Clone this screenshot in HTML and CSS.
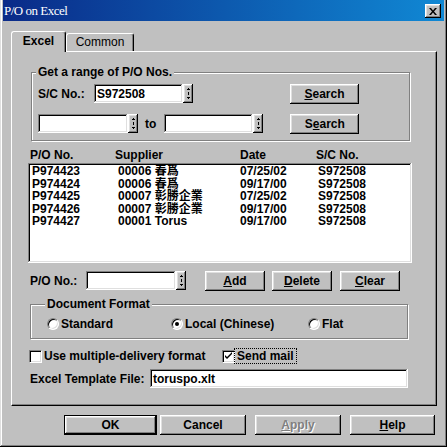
FILE: index.html
```html
<!DOCTYPE html>
<html lang="en">
<head>
    <meta charset="UTF-8">
    <title>P/O on Excel</title>
    <link rel="stylesheet" href="styles.css">
</head>
<body>

<div class="window">
    <div class="titlebar">
        <span class="title">P/O on Excel</span>
        <span class="close">
            <svg width="8" height="7" viewBox="0 0 8 7"><path d="M0 0h2l2 2.5L6 0h2L5 3.5 8 7H6L4 4.5 2 7H0l3-3.5z"/></svg>
        </span>
    </div>

    <div class="tabs">
        <div class="tab active">Excel</div>
        <div class="tab">Common</div>
    </div>

    <div class="panel">
        <fieldset class="group range">
            <legend>Get a range of P/O Nos.</legend>
            <div class="row">
                <span class="label sc-label">S/C No.:</span>
                <div class="combo">
                    <span class="field sc-field">S972508</span>
                    <span class="spin"><svg width="3" height="11" viewBox="0 0 3 11"><path d="M1 0h1v1H1zM0 1h3v1H0zM1 4h1v3H1zM0 9h3v1H0zM1 10h1v1H1z"/></svg></span>
                </div>
                <span class="btn search1"><span><u>S</u>earch</span></span>
            </div>
            <div class="row row2">
                <div class="combo">
                    <span class="field from-field"></span>
                    <span class="spin"><svg width="3" height="11" viewBox="0 0 3 11"><path d="M1 0h1v1H1zM0 1h3v1H0zM1 4h1v3H1zM0 9h3v1H0zM1 10h1v1H1z"/></svg></span>
                </div>
                <span class="to">to</span>
                <div class="combo">
                    <span class="field to-field"></span>
                    <span class="spin"><svg width="3" height="11" viewBox="0 0 3 11"><path d="M1 0h1v1H1zM0 1h3v1H0zM1 4h1v3H1zM0 9h3v1H0zM1 10h1v1H1z"/></svg></span>
                </div>
                <span class="btn search2"><span>S<u>e</u>arch</span></span>
            </div>
        </fieldset>

        <div class="list-head">
            <span>P/O No.</span>
            <span>Supplier</span>
            <span>Date</span>
            <span>S/C No.</span>
        </div>
        <div class="list">
            <div class="item"><span>P974423</span><span>00006 春爲</span><span>07/25/02</span><span>S972508</span></div>
            <div class="item"><span>P974424</span><span>00006 春爲</span><span>09/17/00</span><span>S972508</span></div>
            <div class="item"><span>P974425</span><span>00007 彰勝企業</span><span>07/25/02</span><span>S972508</span></div>
            <div class="item"><span>P974426</span><span>00007 彰勝企業</span><span>09/17/00</span><span>S972508</span></div>
            <div class="item"><span>P974427</span><span>00001 Torus</span><span>09/17/00</span><span>S972508</span></div>
        </div>

        <div class="row po-row">
            <span class="label po-label">P/O No.:</span>
            <div class="combo">
                <span class="field po-field"></span>
                <span class="spin"><svg width="3" height="11" viewBox="0 0 3 11"><path d="M1 0h1v1H1zM0 1h3v1H0zM1 4h1v3H1zM0 9h3v1H0zM1 10h1v1H1z"/></svg></span>
            </div>
            <span class="btn add"><span><u>A</u>dd</span></span>
            <span class="btn delete"><span><u>D</u>elete</span></span>
            <span class="btn clear"><span><u>C</u>lear</span></span>
        </div>

        <fieldset class="group format">
            <legend>Document Format</legend>
            <div class="radios">
                <span class="option opt-standard"><span class="radio"></span>Standard</span>
                <span class="option opt-local"><span class="radio checked"></span>Local (Chinese)</span>
                <span class="option"><span class="radio"></span>Flat</span>
            </div>
        </fieldset>

        <div class="row checks">
            <span class="option opt-multi"><span class="check"></span>Use multiple-delivery format</span>
            <span class="option">
                <span class="check">
                    <svg width="9" height="9" viewBox="0 0 9 9"><path d="M1 3v2l2 2 5-5V0L3 5z"/></svg>
                </span>
                <span class="focus">Send mail</span>
            </span>
        </div>

        <div class="row template-row">
            <span class="label template-label">Excel Template File:</span>
            <span class="field template-field">toruspo.xlt</span>
        </div>
    </div>

    <div class="buttons">
        <span class="btn default ok"><span>OK</span></span>
        <span class="btn cancel"><span>Cancel</span></span>
        <span class="btn disabled apply"><span><u>A</u>pply</span></span>
        <span class="btn help"><span><u>H</u>elp</span></span>
    </div>
</div>

</body>
</html>
```

FILE: styles.css
```css
body {
    margin: 0;
    background: #c0c0c0;
    font-family: 'Liberation Sans', Arial, 'Noto Sans CJK TC', sans-serif;
    font-size: 12px;
    line-height: 14px;
    font-weight: bold;
    color: #000;
}

.window {
    width: 447px;
    height: 447px;
    box-sizing: border-box;
    padding: 0 3px 3px 3px;
    background: #c0c0c0;
    box-shadow: inset -1px -1px #000, inset 1px 0 #dfdfdf, inset -2px -2px #808080, inset 2px 0 #fff;
}

/* title bar */
.titlebar {
    height: 21px;
    display: flex;
    align-items: center;
    justify-content: space-between;
    padding: 0 3px 0 1px;
    background: linear-gradient(90deg, #0a2a88, #1088d4);
    color: #fff;
}

.title {
    font-family: 'Liberation Serif', 'Times New Roman', serif;
    font-weight: normal;
    font-size: 13px;
    letter-spacing: -0.5px;
}

.close {
    width: 16px;
    height: 14px;
    margin-top: 1px;
    box-sizing: border-box;
    display: flex;
    align-items: center;
    justify-content: center;
    background: #c0c0c0;
    box-shadow: inset -1px -1px #000, inset 1px 1px #fff, inset -2px -2px #808080, inset 2px 2px #dfdfdf;
}

/* tabs */
.tabs {
    display: flex;
    align-items: flex-end;
    height: 20px;
    margin: 10px 0 0 8px;
}

.tab {
    box-sizing: border-box;
    height: 18px;
    width: 68px;
    text-align: center;
    line-height: 16px;
    font-weight: normal;
    border-left: 1px solid #fff;
    border-top: 1px solid #fff;
    border-right: 1px solid #000;
    border-radius: 3px 3px 0 0;
    box-shadow: inset -1px 0 #808080;
    background: #c0c0c0;
}

.tab.active {
    width: 55px;
    height: 21px;
    margin-bottom: -1px;
    line-height: 18px;
    position: relative;
    z-index: 1;
    font-weight: bold;
}

.panel {
    box-sizing: border-box;
    width: 426px;
    height: 355px;
    margin-left: 8px;
    padding: 13px 0 0 19px;
    border-top: 1px solid #fff;
    border-left: 1px solid #fff;
    border-right: 1px solid #000;
    border-bottom: 1px solid #000;
    box-shadow: inset -1px -1px #808080;
}

/* group boxes */
.group {
    box-sizing: border-box;
    margin: 0;
    border: 1px solid #808080;
    box-shadow: 1px 1px 0 #fff, inset 1px 1px 0 #fff;
}

.group legend {
    padding: 0 2px;
    margin-left: -2px;
    line-height: 14px;
    background: #c0c0c0;
}

.range {
    width: 379px;
    padding: 5px 0 6px 6px;
}

.format {
    width: 378px;
    margin: 6px 0 0 -1px;
    padding: 6px 0 7px 16px;
}

.row {
    display: flex;
    align-items: center;
    height: 20px;
}

.row2 {
    margin-top: 10px;
}

.label {
    flex: none;
}

.sc-label { width: 56px; }

/* fields and buttons */
.field {
    box-sizing: border-box;
    display: block;
    height: 19px;
    padding: 3px 3px 1px;
    line-height: 15px;
    background: #fff;
    box-shadow: inset -1px -1px #fff, inset 1px 1px #808080, inset -2px -2px #dfdfdf, inset 2px 2px #000;
}

.combo {
    display: flex;
    align-self: flex-start;
}

.sc-field { width: 89px; }
.from-field { width: 90px; }
.to-field { width: 89px; }
.po-field { width: 90px; }

.spin {
    box-sizing: border-box;
    width: 10px;
    height: 19px;
    display: flex;
    align-items: center;
    justify-content: center;
    background: #c0c0c0;
    box-shadow: inset -1px -1px #000, inset 1px 1px #fff, inset -2px -2px #808080, inset 2px 2px #dfdfdf;
}

.to {
    margin: 0 8px 0 7px;
}

.btn {
    box-sizing: border-box;
    display: flex;
    align-items: center;
    justify-content: center;
    height: 20px;
    background: #c0c0c0;
    box-shadow: inset -1px -1px #000, inset 1px 1px #fff, inset -2px -2px #808080, inset 2px 2px #dfdfdf;
}

.search1 { width: 69px; margin-left: 97px; }
.search2 { width: 69px; margin-left: 27px; }

/* list */
.list-head {
    display: grid;
    grid-template-columns: 85px 125px 76px auto;
    margin: 7px 0 0 -1px;
    height: 14px;
}

.list {
    box-sizing: border-box;
    width: 384px;
    height: 100px;
    margin: 1px 0 0 -3px;
    padding: 2px 2px 2px 4px;
    background: #fff;
    box-shadow: inset -1px -1px #fff, inset 1px 1px #808080, inset -2px -2px #dfdfdf, inset 2px 2px #000;
}

.item {
    display: grid;
    grid-template-columns: 86px 122px 78px auto;
    line-height: 12.5px;
}

.po-row {
    margin-top: 8px;
}

.po-label {
    width: 56px;
    margin-left: -1px;
}

.add { width: 60px; margin-left: 19px; }
.delete { width: 60px; margin-left: 7px; }
.clear { width: 60px; margin-left: 8px; }

/* radios and checks */
.radios {
    display: flex;
    height: 14px;
    align-items: center;
}

.option {
    display: flex;
    align-items: center;
}

.opt-standard { width: 124px; }
.opt-local { width: 137px; }

.radio {
    box-sizing: border-box;
    width: 12px;
    height: 12px;
    margin-right: 2px;
    border-radius: 50%;
    border: 1px solid;
    border-color: #808080 #fff #fff #808080;
    background: #fff;
    box-shadow: inset 1px 1px #000, inset -1px -1px #dfdfdf;
    display: flex;
    align-items: center;
    justify-content: center;
}

.radio.checked::after {
    content: '';
    width: 4px;
    height: 4px;
    border-radius: 50%;
    background: #000;
}

.checks {
    margin: 10px 0 0 -2px;
    height: 14px;
}

.opt-multi { width: 193px; }

.check {
    box-sizing: border-box;
    width: 13px;
    height: 13px;
    margin-right: 2px;
    border: 1px solid;
    border-color: #808080 #fff #fff #808080;
    background: #fff;
    box-shadow: inset 1px 1px #000, inset -1px -1px #dfdfdf;
    display: flex;
    align-items: center;
    justify-content: center;
}

.focus {
    margin-left: -2px;
    padding: 0 2px;
    outline: 1px dotted #000;
    line-height: 14px;
}

.template-row {
    margin-top: 6px;
    height: 19px;
}

.template-label {
    width: 120px;
    margin-left: -1px;
}

.template-field {
    width: 258px;
}

/* dialog buttons */
.buttons {
    display: flex;
    margin-top: 9px;
}

.ok { width: 93px; margin-left: 61px; }
.cancel { width: 86px; margin-left: 3px; }
.apply { width: 86px; margin-left: 9px; }
.help { width: 85px; margin-left: 9px; }

.btn.default {
    box-shadow: inset 0 0 0 1px #000, inset -2px -2px #000, inset 2px 2px #fff, inset -3px -3px #808080, inset 3px 3px #dfdfdf;
}

.btn.disabled {
    color: #808080;
    text-shadow: 1px 1px 0 #fff;
}
```
